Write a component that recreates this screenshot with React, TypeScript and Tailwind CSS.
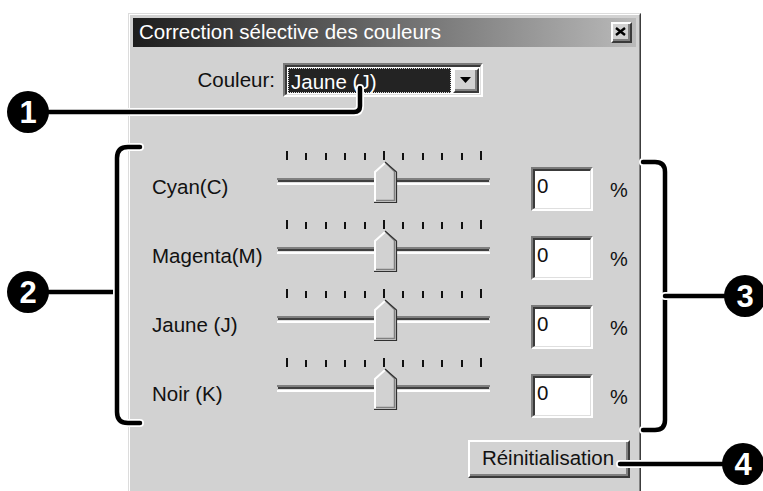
import React from "react";

const FONT = { fontFamily: '"Liberation Sans", Arial, sans-serif' };

function Slider() {
  const ticks = Array.from({ length: 11 }, (_, i) => i);
  return (
    <svg width="213" height="62" viewBox="0 0 213 62" className="block shrink-0">
      {ticks.map((i) => {
        const x = 10 + i * 19.4;
        const long = i === 0 || i === 5 || i === 10;
        return (
          <rect
            key={i}
            x={Math.round(x) - 1}
            y={long ? 1 : 3}
            width="2"
            height={long ? 9 : 7}
            fill="#111"
          />
        );
      })}
      <rect x="0" y="28" width="213" height="2" fill="#808080" />
      <rect x="1" y="30" width="211" height="2" fill="#404040" />
      <rect x="1" y="32" width="212" height="1" fill="#dfdfdf" />
      <rect x="0" y="33" width="213" height="2" fill="#ffffff" />
      <polygon points="97,22 108,12 119,22 119,52 97,52" fill="#d2d2d2" />
      <polyline points="98,51 98,22 108,13" fill="none" stroke="#ffffff" strokeWidth="2" />
      <polyline points="109,13 117.5,21.5 117.5,50.5 99,50.5" fill="none" stroke="#808080" strokeWidth="1.5" />
      <polyline points="108,12 119.5,22 119.5,52.5 97,52.5" fill="none" stroke="#303030" strokeWidth="1.2" />
    </svg>
  );
}

function Sunken({ className, children }: { className?: string; children?: React.ReactNode }) {
  return (
    <div className={"border-t-2 border-l-2 border-t-[#7a7a7a] border-l-[#7a7a7a] border-b-2 border-r-2 border-b-[#ffffff] border-r-[#ffffff] " + (className || "")}>
      <div className="w-full h-full border-t-2 border-l-2 border-t-[#3a3a3a] border-l-[#3a3a3a] border-b border-r border-b-[#dfdfdf] border-r-[#dfdfdf]">
        {children}
      </div>
    </div>
  );
}

function Raised({ className, children }: { className?: string; children?: React.ReactNode }) {
  return (
    <div className={"border-t-2 border-l-2 border-t-[#ffffff] border-l-[#ffffff] border-b-2 border-r-2 border-b-[#3a3a3a] border-r-[#3a3a3a] bg-[#d2d2d2] " + (className || "")}>
      <div className="w-full h-full border-b-2 border-r-2 border-b-[#808080] border-r-[#808080] flex items-center justify-center">
        {children}
      </div>
    </div>
  );
}

function Row({ label }: { label: string }) {
  return (
    <div className="flex h-[69px] pl-[19px]">
      <div className="w-[125px] pt-[26px] leading-[22px] text-[20.5px] text-[#111]">{label}</div>
      <Slider />
      <Sunken className="ml-[41px] mt-[17px] w-[62px] h-[44px] shrink-0">
        <div className="w-full h-full bg-white pl-[2px] pt-[4px] text-[20.5px] leading-[22px] text-[#111]">0</div>
      </Sunken>
      <div className="ml-[17px] pt-[29px] leading-[22px] text-[20px] text-[#111]">%</div>
    </div>
  );
}

function Badge({ n, left, top }: { n: string; left: string; top: string }) {
  return (
    <div
      className={"absolute w-[42px] h-[42px] rounded-full bg-black text-white font-bold text-[31px] leading-none flex items-center justify-center " + left + " " + top}
    >
      {n}
    </div>
  );
}

export default function App() {
  return (
    <div className="relative w-[763px] h-[491px] overflow-hidden bg-white pt-[13px] pl-[128px]" style={FONT}>
      <div className="w-[513px] h-[500px] border-t border-l border-t-[#dcdcdc] border-l-[#dcdcdc] border-r border-b border-r-[#3c3c3c] border-b-[#3c3c3c]">
        <div className="w-full h-full border-t border-l border-t-white border-l-white border-r border-b border-r-[#828282] border-b-[#828282] bg-[#d2d2d2] p-[3px]">
          {/* Title bar */}
          <div className="h-[29px] flex items-center justify-between pl-[6px] pr-[4px] bg-gradient-to-r from-[#1e1e1e] via-[#6a6a6a] to-[#bababa]">
            <span className="text-white text-[20.5px] leading-none">Correction sélective des couleurs</span>
            <Raised className="w-[21px] h-[21px]">
              <svg width="11" height="9" viewBox="0 0 11 9">
                <path d="M1 1 L10 8 M10 1 L1 8" stroke="#000" strokeWidth="2.4" />
              </svg>
            </Raised>
          </div>

          {/* Couleur combo */}
          <div className="mt-[16px] flex items-center">
            <div className="w-[142px] text-right text-[20.5px] leading-[22px] text-[#111]">Couleur:</div>
            <Sunken className="ml-[8px] w-[200px] h-[34px]">
              <div className="w-full h-full bg-white flex items-stretch p-[1px]">
                <div className="flex-1 bg-[#232323] border border-dotted border-[#dcdcdc] mr-[2px] text-white text-[20.5px] leading-[26px] pl-[2px]">
                  Jaune (J)
                </div>
                <Raised className="w-[26px] shrink-0">
                  <svg width="11" height="6" viewBox="0 0 11 6">
                    <path d="M0 0 H11 L5.5 6 Z" fill="#000" />
                  </svg>
                </Raised>
              </div>
            </Sunken>
          </div>

          <div className="mt-[53px]">
            <Row label="Cyan(C)" />
            <Row label="Magenta(M)" />
            <Row label="Jaune (J)" />
            <Row label="Noir (K)" />
          </div>

          <div className="mt-[14px] flex justify-end pr-[6px]">
            <Raised className="w-[162px] h-[38px]">
              <span className="text-[20.5px] leading-none text-[#111]">Réinitialisation</span>
            </Raised>
          </div>
        </div>
      </div>

      {/* Callouts */}
      <svg className="absolute inset-0 pointer-events-none" width="763" height="491" viewBox="0 0 763 491">
        {[
          "M40 112 H354 Q360 112 360 106 V88",
          "M40 292 H117",
          "M140 147 H128 Q117 147 117 158 V412 Q117 423 128 423 H140",
          "M643 162 H655 Q665 162 665 172 V420 Q665 430 655 430 H643",
          "M665 296 H735",
          "M620 464 H735",
        ].map((d, i) => (
          <g key={i}>
            <path d={d} fill="none" stroke="#fff" strokeWidth="8" strokeLinecap="round" strokeLinejoin="round" />
            <path d={d} fill="none" stroke="#000" strokeWidth="4.5" strokeLinecap="round" strokeLinejoin="round" />
          </g>
        ))}
      </svg>
      <Badge n="1" left="left-[7px]" top="top-[91px]" />
      <Badge n="2" left="left-[7px]" top="top-[271px]" />
      <Badge n="3" left="left-[724px]" top="top-[275px]" />
      <Badge n="4" left="left-[722px]" top="top-[443px]" />
    </div>
  );
}
